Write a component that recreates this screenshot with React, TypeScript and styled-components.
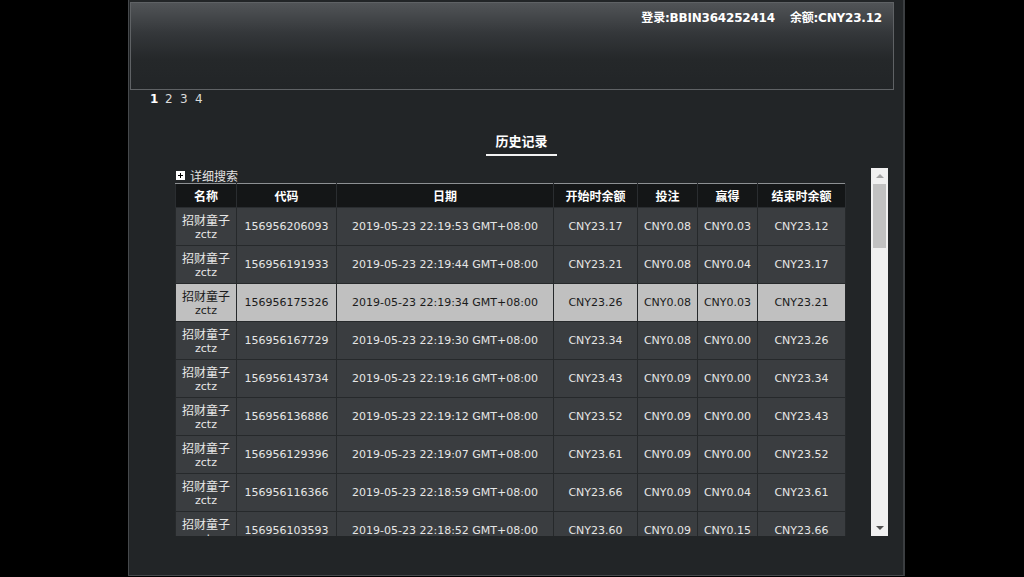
import React from "react";
import styled, { createGlobalStyle, css } from "styled-components";

const Global = createGlobalStyle`
  html, body { margin: 0; padding: 0; background: #000; }
  body { font-family: "DejaVu Sans", "Noto Sans CJK SC", sans-serif; overflow: hidden; }
  * { box-sizing: border-box; }
`;

const Frame = styled.div`
  margin-left: 128px;
  width: 777px;
  height: 576px;
  background: #222527;
  border-left: 1px solid #46494c;
  border-right: 2px solid #3b3e41;
  border-bottom: 1px solid #46494c;
  padding-top: 2px;
  display: flex;
  flex-direction: column;
`;

const Header = styled.header`
  margin: 0 9px 0 1px;
  height: 88px;
  border: 1px solid #5f6265;
  background: linear-gradient(180deg, #515457 0%, #34373a 35%, #25282a 65%, #222527 100%);
  display: flex;
  justify-content: flex-end;
  align-items: flex-start;
  gap: 15px;
  padding: 5px 11px 0 0;
`;

const Account = styled.span`
  color: #fff;
  font-weight: bold;
  font-size: 12px;
  font-family: "DejaVu Sans", "Noto Sans CJK SC", sans-serif;
  letter-spacing: -0.2px;
`;

const Pager = styled.nav`
  display: flex;
  gap: 5px;
  padding-left: 21px;
  height: 16px;
  align-items: center;
  margin-top: 1px;
`;

const PageLink = styled.span<{ $active?: boolean }>`
  font-size: 12px;
  color: ${(p) => (p.$active ? "#fff" : "#dadada")};
  font-weight: ${(p) => (p.$active ? "bold" : "normal")};
  width: 10px;
`;

const TitleRow = styled.div`
  display: flex;
  justify-content: center;
  margin-top: 27px;
  padding-left: 11px;
`;

const Title = styled.h2`
  margin: 0;
  padding: 0 9px 4px;
  font-size: 13px;
  font-weight: bold;
  color: #fff;
  line-height: 16px;
  border-bottom: 2px solid #f2f2f2;
`;

const ListArea = styled.section`
  margin: 12px 0 0 46px;
  width: 713px;
  height: 368px;
  display: flex;
`;

const Content = styled.div`
  flex: 1;
  overflow: hidden;
`;

const SearchToggle = styled.div`
  height: 15px;
  display: flex;
  align-items: center;
  gap: 5px;
  padding-left: 1px;
  font-size: 12px;
  color: #e2e2e2;
  font-family: "Noto Sans CJK SC", sans-serif;
`;

const PlusBox = styled.span`
  width: 9px;
  height: 9px;
  background: #fff;
  position: relative;
  &::before, &::after {
    content: "";
    position: absolute;
    background: #000;
  }
  &::before { left: 2px; top: 4px; width: 5px; height: 1px; }
  &::after { left: 4px; top: 2px; width: 1px; height: 5px; }
`;

const Table = styled.table`
  width: 670px;
  border-collapse: collapse;
  table-layout: fixed;
  border: 1px solid #8d9093;
  font-size: 11px;
`;

const HeadCell = styled.th`
  height: 24px;
  background: #141617;
  color: #fff;
  font-weight: bold;
  font-size: 12px;
  font-family: "DejaVu Sans", "Noto Sans CJK SC", sans-serif;
  border: 1px solid #2a2d30;
  border-top-color: #8d9093;
  padding: 0;
`;

const Row = styled.tr<{ $selected?: boolean }>`
  ${(p) =>
    p.$selected
      ? css`
          td { background: #c0c0c0; color: #1b1b1b; }
        `
      : ""}
`;

const Cell = styled.td`
  height: 38px;
  background: #3a3d40;
  color: #e6e6e6;
  border: 1px solid #26292b;
  text-align: center;
  padding: 0;
  white-space: nowrap;
`;

const NameLine = styled.div`
  font-size: 12px;
  line-height: 15px;
  font-family: "Noto Sans CJK SC", sans-serif;
`;

const CodeLine = styled.div`
  font-size: 11px;
  line-height: 15px;
`;

const ScrollBar = styled.div`
  width: 17px;
  background: #f0f0f0;
  display: flex;
  flex-direction: column;
  align-items: center;
`;

const Arrow = styled.div<{ $dir: "up" | "down" }>`
  height: 16px;
  width: 100%;
  display: flex;
  align-items: center;
  justify-content: center;
  &::before {
    content: "";
    border-left: 4px solid transparent;
    border-right: 4px solid transparent;
    ${(p) =>
      p.$dir === "up"
        ? css`border-bottom: 4px solid #a3a3a3;`
        : css`border-top: 4px solid #505050;`}
  }
`;

const Thumb = styled.div`
  width: 13px;
  height: 64px;
  background: #c1c1c1;
`;

const Track = styled.div`
  flex: 1;
`;

type Rec = {
  code: string;
  time: string;
  start: string;
  bet: string;
  win: string;
  end: string;
};

const records: Rec[] = [
  { code: "156956206093", time: "22:19:53", start: "23.17", bet: "0.08", win: "0.03", end: "23.12" },
  { code: "156956191933", time: "22:19:44", start: "23.21", bet: "0.08", win: "0.04", end: "23.17" },
  { code: "156956175326", time: "22:19:34", start: "23.26", bet: "0.08", win: "0.03", end: "23.21" },
  { code: "156956167729", time: "22:19:30", start: "23.34", bet: "0.08", win: "0.00", end: "23.26" },
  { code: "156956143734", time: "22:19:16", start: "23.43", bet: "0.09", win: "0.00", end: "23.34" },
  { code: "156956136886", time: "22:19:12", start: "23.52", bet: "0.09", win: "0.00", end: "23.43" },
  { code: "156956129396", time: "22:19:07", start: "23.61", bet: "0.09", win: "0.00", end: "23.52" },
  { code: "156956116366", time: "22:18:59", start: "23.66", bet: "0.09", win: "0.04", end: "23.61" },
  { code: "156956103593", time: "22:18:52", start: "23.60", bet: "0.09", win: "0.15", end: "23.66" },
];

const columns = [
  { label: "名称", width: 61 },
  { label: "代码", width: 100 },
  { label: "日期", width: 217 },
  { label: "开始时余额", width: 84 },
  { label: "投注", width: 60 },
  { label: "赢得", width: 60 },
  { label: "结束时余额", width: 88 },
];

export default function App() {
  return (
    <>
      <Global />
      <Frame>
        <Header>
          <Account>登录:BBIN364252414</Account>
          <Account>余额:CNY23.12</Account>
        </Header>
        <Pager>
          <PageLink $active>1</PageLink>
          <PageLink>2</PageLink>
          <PageLink>3</PageLink>
          <PageLink>4</PageLink>
        </Pager>
        <TitleRow>
          <Title>历史记录</Title>
        </TitleRow>
        <ListArea>
          <Content>
            <SearchToggle>
              <PlusBox />
              详细搜索
            </SearchToggle>
            <Table>
              <colgroup>
                {columns.map((c) => (
                  <col key={c.label} style={{ width: c.width }} />
                ))}
              </colgroup>
              <thead>
                <tr>
                  {columns.map((c) => (
                    <HeadCell key={c.label}>{c.label}</HeadCell>
                  ))}
                </tr>
              </thead>
              <tbody>
                {records.map((r, i) => (
                  <Row key={r.code} $selected={i === 2}>
                    <Cell>
                      <NameLine>招财童子</NameLine>
                      <CodeLine>zctz</CodeLine>
                    </Cell>
                    <Cell>{r.code}</Cell>
                    <Cell>2019-05-23 {r.time} GMT+08:00</Cell>
                    <Cell>CNY{r.start}</Cell>
                    <Cell>CNY{r.bet}</Cell>
                    <Cell>CNY{r.win}</Cell>
                    <Cell>CNY{r.end}</Cell>
                  </Row>
                ))}
              </tbody>
            </Table>
          </Content>
          <ScrollBar>
            <Arrow $dir="up" />
            <Thumb />
            <Track />
            <Arrow $dir="down" />
          </ScrollBar>
        </ListArea>
      </Frame>
    </>
  );
}
